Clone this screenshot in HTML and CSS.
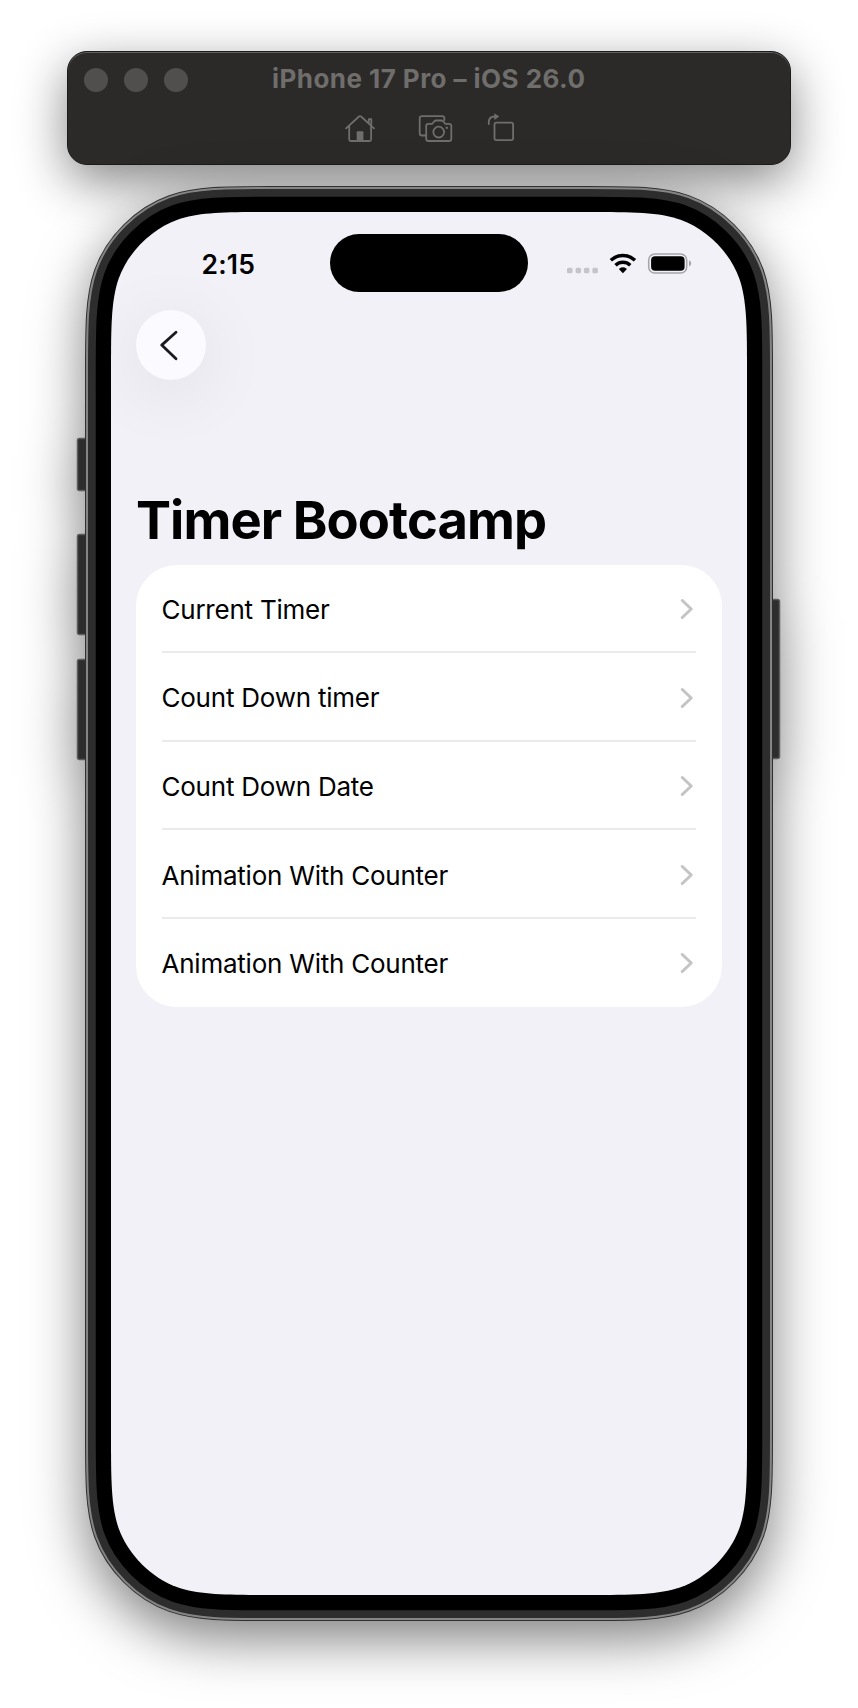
FILE: index.html
```html
<!DOCTYPE html>
<html lang="en">
<head>
<meta charset="utf-8">
<title>Timer Bootcamp</title>
<link rel="stylesheet" href="styles.css">
</head>
<body>
<header class="window-bar">
  <div class="title-row">
    <div class="lights"><i></i><i></i><i></i></div>
    <div class="window-title"><span>iPhone 17 Pro – iOS 26.0</span></div>
  </div>
  <div class="tools">
    <svg width="32" height="30" viewBox="344 114 32 30">
      <path d="M346 128.300L359 116.500Q360 115.700 361 116.500L374 128.300M349.200 126V139.500Q349.200 141 350.700 141H369.600Q371.100 141 371.100 139.500V126M368.800 123V119.200H371.300V125"/>
      <path class="solid" d="M356.700 141V132.200Q356.700 131.200 357.700 131.200H362.400Q363.400 131.200 363.400 132.200V141Z"/>
    </svg>
    <svg width="36" height="30" viewBox="418 114 36 30">
      <path d="M425.500 135.500H422Q419.700 135.500 419.700 133.200V118.500Q419.700 116.200 422 116.200H442Q444.400 116.200 444.400 118.500V120"/>
      <path d="M428.500 123.800H432.300L434.300 121.300Q435 120.500 436 120.500H441.500Q442.500 120.500 443.200 121.300L445.200 123.800H449Q451.300 123.800 451.300 126.100V138.700Q451.300 141 449 141H428.500Q426.200 141 426.200 138.700V126.100Q426.200 123.800 428.500 123.800Z"/>
      <circle cx="438.700" cy="132.100" r="5.400"/><circle class="solid" cx="446.800" cy="127.700" r="1.200"/>
    </svg>
    <svg width="30" height="30" viewBox="486 112 30 30">
      <rect x="494.500" y="122.700" width="18.600" height="17.400" rx="1.800"/>
      <path d="M488.800 124V122Q488.800 116.700 494.500 116.500"/>
      <path class="solid" d="M494.300 113.200L499.300 116.600L494.300 120Z"/>
    </svg>
  </div>
</header>

<main class="phone">
  <svg class="frame" width="688" height="1435" viewBox="-26 -26 688 1435">
    <defs>
      <path id="outline" d="M160 0H476C522 0 548 .2 569.500 7.700C595.500 16.900 619.100 40.500 628.300 66.500C635.800 88 636 114 636 160V1223C636 1269 635.800 1295 628.300 1316.500C619.100 1342.500 595.500 1366.100 569.500 1375.300C548 1382.800 522 1383 476 1383H160C114 1383 88 1382.800 66.500 1375.300C40.500 1366.100 16.900 1342.500 7.700 1316.500C.2 1295 0 1269 0 1223V160C0 114 .2 88 7.700 66.500C16.900 40.500 40.500 16.900 66.500 7.700C88 .2 114 0 160 0Z"/>
    </defs>
    <g class="body">
      <g class="side">
        <rect x="-33.500" y="226.500" width="12" height="52" rx="2"/>
        <rect x="-33.500" y="322.500" width="12" height="100" rx="2"/>
        <rect x="-33.500" y="447.500" width="12" height="100" rx="2"/>
        <rect x="656.500" y="387.500" width="12" height="159" rx="2"/>
      </g>
      <use href="#outline" fill="#000" stroke="#303030" stroke-width="52"/>
    </g>
    <use href="#outline" stroke="#858585" stroke-width="50"/>
    <use href="#outline" stroke="#2d2d2d" stroke-width="46"/>
    <use href="#outline" stroke="#000" stroke-width="30.500"/>
    <use href="#outline" fill="#f2f1f7"/>
  </svg>
  <div class="screen">
    <div class="status">
      <span class="time">2:15</span>
      <span class="island"></span>
      <svg class="indicators" width="128" height="26" viewBox="566 250 128 26">
        <g fill="#c5c4ca"><rect x="567" y="267.700" width="5.500" height="5.500" rx="1.500"/><rect x="575.600" y="267.700" width="5.500" height="5.500" rx="1.500"/><rect x="583.900" y="267.700" width="5.500" height="5.500" rx="1.500"/><rect x="592.400" y="267.700" width="5.500" height="5.500" rx="1.500"/></g>
        <path fill="none" stroke="#000" stroke-width="3.500" d="M610.800 260.200Q616.300 255.400 622.900 255.400T635 260.200M615.500 265.200Q618.800 262.300 622.900 262.300T630.300 265.200"/>
        <path d="M622.900 273.200L619.300 269.600Q618.700 269 619.500 268.500Q622.900 266.200 626.300 268.500Q627.100 269 626.500 269.600Z"/>
        <rect x="648.700" y="253.900" width="38" height="19.200" rx="6" fill="none" stroke="#a5a4a9" stroke-width="1.500"/>
        <rect x="651.100" y="256.200" width="33.500" height="14.600" rx="4"/>
        <path fill="#a5a4a9" d="M689 260.300Q691.200 261.300 691.200 263.400T689 266.500Z"/>
      </svg>
    </div>
    <div class="back"><svg width="70" height="70" viewBox="136 310 70 70"><path d="M176 332.300L161.700 345.100L176 358.700"/></svg></div>
    <h1 class="heading">Timer Bootcamp</h1>
    <ul class="list">
      <li><span>Current Timer</span><svg class="chev" viewBox="0 0 14 22"><path d="M3.300 2.500L12.200 11L3.300 19.500"/></svg></li>
      <li><span>Count Down timer</span><svg class="chev" viewBox="0 0 14 22"><path d="M3.300 2.500L12.200 11L3.300 19.500"/></svg></li>
      <li><span>Count Down Date</span><svg class="chev" viewBox="0 0 14 22"><path d="M3.300 2.500L12.200 11L3.300 19.500"/></svg></li>
      <li><span>Animation With Counter</span><svg class="chev" viewBox="0 0 14 22"><path d="M3.300 2.500L12.200 11L3.300 19.500"/></svg></li>
      <li><span>Animation With Counter</span><svg class="chev" viewBox="0 0 14 22"><path d="M3.300 2.500L12.200 11L3.300 19.500"/></svg></li>
    </ul>
  </div>
</main>
</body>
</html>
```

FILE: styles.css
```css
* { box-sizing: border-box; }
html, body { margin: 0; }
body {
  width: 858px;
  height: 1708px;
  overflow: hidden;
  background: #fff;
  padding-top: 51px;
  font-family: Inter, "Liberation Sans", sans-serif;
  color: #000;
}
svg { display: block; }

/* Simulator window bar */
.window-bar {
  width: 724px;
  height: 114px;
  margin-left: 67px;
  border-radius: 20px;
  background: #2b2a28;
  border: 1px solid #1b1b1a;
  box-shadow: inset 0 1px 0 #60605e, 0 16px 50px rgba(0, 0, 0, .48);
}
.title-row { display: flex; height: 56px; align-items: center; padding-left: 16px; }
.lights { display: flex; gap: 16px; }
.lights i { width: 24px; height: 24px; border-radius: 50%; background: #504f4d; }
.window-title { margin-left: 84px; padding-bottom: 3px; font-size: 26px; font-weight: 700; letter-spacing: .45px; color: #6f6e6c; white-space: nowrap; }
.tools { display: flex; padding: 6px 0 0 276px; }
.tools svg { fill: none; stroke: #6f6e6c; stroke-width: 1.8; stroke-linecap: round; stroke-linejoin: round; }
.tools svg + svg { margin-left: 42px; }
.tools svg:last-child { margin: -2px 0 0 32px; }
.tools .solid { fill: #6f6e6c; stroke: none; }

/* Device */
.phone { position: relative; width: 688px; height: 1435px; margin: 21px 0 0 85px; }
.frame { position: absolute; inset: 0; overflow: visible; fill: none; }
.body { filter: drop-shadow(0 18px 27px rgba(0, 0, 0, .5)); }
.side { fill: #2d2d2d; stroke: #5c5c5c; stroke-width: 1.5; }
.screen { position: relative; padding: 48px 25px 0; margin: 0 26px; }

.status { display: flex; height: 58px; }
.time { width: 193.500px; padding: .5px 0 0 65.5px; font-size: 26.500px; letter-spacing: .2px; font-weight: 600; line-height: 58px; }
.island { width: 198.500px; height: 58px; border-radius: 29px; background: #000; }
.indicators { margin: 16px 0 0 38px; }

.back {
  width: 70px;
  height: 70px;
  margin-top: 18px;
  border-radius: 50%;
  background: #fafaff;
  box-shadow: 0 12px 72px rgba(0, 0, 0, .09);
}
.back path { fill: none; stroke: #1b1a20; stroke-width: 2.800; stroke-linecap: round; stroke-linejoin: round; }

.heading { margin: 108px 0 0; height: 76.500px; font-size: 52.500px; line-height: 64px; font-weight: 700; letter-spacing: -.92px; white-space: nowrap; }

.list { list-style: none; margin: 0; padding: 0 25.5px; width: 585.500px; height: 442.500px; border-radius: 41px; background: #fff; }
.list li { display: flex; align-items: center; justify-content: space-between; height: 88.600px; padding-top: 3px; font-size: 26px; letter-spacing: -.23px; border-bottom: 2px solid #ebebec; }
.list li:last-child { height: 88px; padding-top: 1px; border: 0; }
.chev { width: 14px; height: 22px; margin-right: 3px; fill: none; stroke: #c4c4c6; stroke-width: 3; stroke-linecap: round; stroke-linejoin: round; }
```
